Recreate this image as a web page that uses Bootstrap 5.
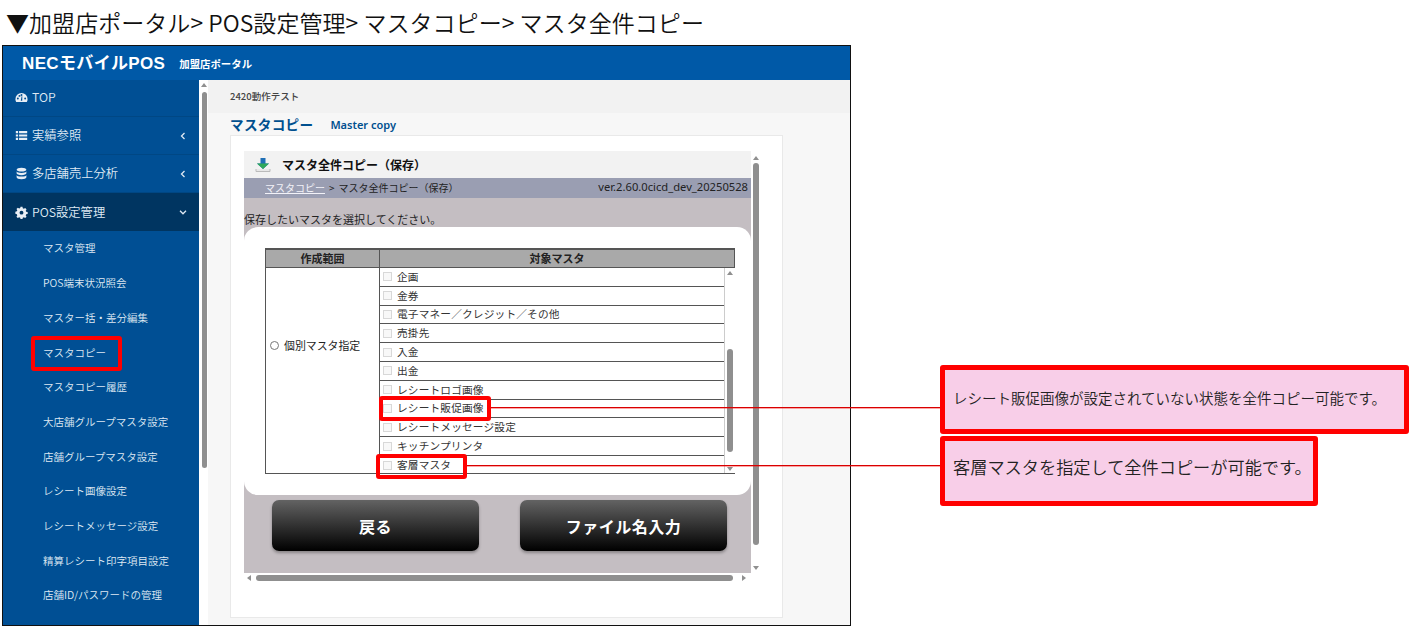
<!DOCTYPE html>
<html lang="ja"><head><meta charset="utf-8"><title>マスタ全件コピー</title>
<link href="https://cdn.jsdelivr.net/npm/bootstrap@5.3.0/dist/css/bootstrap.min.css" rel="stylesheet">
<style>
html,body{height:628px;overflow:hidden;background:#fff}
body{font-family:"Noto Sans CJK JP","Liberation Sans",sans-serif;position:relative;color:#222}
.doc-title{height:45px;padding:6px 0 0 6px;font-size:23px;line-height:32px;color:#111;white-space:nowrap;font-weight:350;letter-spacing:.05px}
.app-win{margin-left:2px;width:849px;height:581px;border:1px solid #111;overflow:hidden;background:#f7f7f7}
.app-head{height:34px;background:#0059a7;color:#fff;padding-left:19px;flex:none}
.app-logo{font-family:"Liberation Sans","Noto Sans CJK JP",sans-serif;font-weight:700;font-size:17px;letter-spacing:.35px;margin-top:1px}
.app-sub{font-size:10.4px;font-weight:700;margin-left:14px;margin-top:1px}
.app-side{width:196px;background:#004f94;color:#dfe9f3;flex:none}
.side-main{height:38px;padding:0 12px;font-size:12.3px;border-bottom:1px solid #004784;font-weight:350}
.side-main:first-child{height:37px;padding-bottom:2px}
.side-main svg{width:13px;height:13px;fill:#e8eef5;margin-right:4px;flex:none}
.side-main .chev{margin-left:auto;margin-right:0;width:8px;height:8px;stroke:#dfe9f3;fill:none;stroke-width:1.3}
.side-open{background:#003561;color:#dfe9f3;border-bottom:0}
.side-sub{height:34.7px;padding-left:40px;font-size:10.5px;font-weight:350}
.app-main{flex:1;min-width:0;position:relative}
.vbar{width:9px;background:#fff;flex:none;position:relative}
.sb-thumb{background:#8f8f8f;border-radius:3px}
.main-vthumb{width:5px;height:376px;margin:5px 0 0 3px}
.arr-u,.arr-d,.arr-l,.arr-r{width:0;height:0;border-style:solid;border-color:transparent}
.arr-u{border-width:0 3px 4px;border-bottom-color:#8f8f8f}
.arr-d{border-width:4px 3px 0;border-top-color:#8f8f8f}
.arr-l{border-width:3px 4px 3px 0;border-right-color:#8f8f8f}
.arr-r{border-width:3px 0 3px 4px;border-left-color:#8f8f8f}
.main-up{margin:3px 0 0 2px}
.store-bar{height:33px;background:#f2f2f2;padding-left:22px;font-size:9.5px;font-weight:500;color:#444}
.page-head{height:22px;padding:0 0 0 22px;color:#00508f;font-weight:700}
.page-title{font-size:13.6px;letter-spacing:.3px}
.page-en{font-family:"Noto Sans","Liberation Sans",sans-serif;font-size:11px;margin-left:17px;font-weight:600;margin-top:3px}
.wcard{width:553px;height:483px;margin-left:22px;background:#fff;border:1px solid #e9e9e9;padding:15px 0 0 13px}
.frame-col{width:507px;flex:none}
.frame-top{height:27px;background:#f2f2f2;padding-left:10px;font-size:12px;font-weight:700;color:#111}
.frame-top svg{width:18px;height:18px;margin-right:10px}
.crumb{height:20px;background:#9a9eb2;font-size:10px;color:#222;padding:0 3px 2px 21px}
.crumb a{color:#f2f2f8}
.crumb-sep{margin:0 4px}
.crumb-ver{margin-left:auto;font-family:"Noto Sans","Liberation Sans",sans-serif;font-size:11.2px;color:#222}
.frame-body{height:375px;background:#c4bec2;padding-top:14px}
.lead-txt{font-size:11px;line-height:15px;color:#222}
.panel-w{height:268px;background:#fff;border-radius:14px;margin-top:0;padding:21px 16px 0 21px}
.tbl{width:470px;height:226px;border:1px solid #555;border-top:2px solid #555}
.tbl-head{height:18px;background:#a9a9a9;font-size:11px;font-weight:700;color:#222;border-bottom:1px solid #555;text-align:center}
.th-a{width:114px;border-right:1px solid #555;line-height:17px}
.th-b{flex:1;line-height:17px}
.td-a{width:114px;font-size:10.9px;padding-left:4px;border-right:1px solid #555;flex:none;padding-bottom:50px}
.radio-o{width:9px;height:9px;border:1px solid #777;border-radius:50%;margin-right:5px;background:#fff}
.td-list{width:344px;flex:none}
.rowx{height:18.8px;border-bottom:1px solid #555;font-size:10.7px;padding-left:3px;color:#333;letter-spacing:.15px}
.rowx:last-child{border-bottom:0}
.box-c{width:9px;height:9px;border:1px solid #d8d8d8;background:#f8f8f8;margin-right:5px;flex:none}
.tbar{width:11px;flex:none;background:#fff;border-left:1px solid #ccc;position:relative}
.tbar-thumb{position:absolute;left:2px;top:81px;width:6px;height:103px}
.tbar .arr-u{position:absolute;left:2px;top:3px}
.tbar .arr-d{position:absolute;left:2px;bottom:2px}
.btn-row{height:75px;padding:5px 23px 0 28px;gap:41px}
.btn-blk{width:207px;height:51px;border-radius:7px;border:0;padding:0;color:#fff;font-weight:700;font-size:16px;letter-spacing:.5px;background:linear-gradient(#636363,#000);box-shadow:0 2px 3px rgba(0,0,0,.3)}
.btn-blk:hover,.btn-blk:active{color:#fff}
.frame-vbar{height:422px;padding-left:2px}
.frame-vbar .arr-u{margin:5px 0 3px 0}
.frame-vbar .sb-thumb{width:6px;height:382px}
.frame-vbar .arr-d{position:absolute;left:2px;top:415px}
.hbar{height:10px;width:507px;position:relative}
.hbar .sb-thumb{position:absolute;left:12px;top:2px;width:477px;height:6px}
.hbar .arr-l{position:absolute;left:3px;top:2px}
.hbar .arr-r{position:absolute;left:498px;top:2px}
.mark-r{position:absolute;border:4px solid #f00;border-radius:3px;pointer-events:none}
.mk-side{left:31px;top:336px;width:91px;height:35px}
.mk-a{left:379px;top:396px;width:112px;height:25px}
.mk-b{left:376px;top:454px;width:91px;height:25px}
.lead-r{position:absolute;height:1px;background:#d80000;box-shadow:0 1px 0 rgba(255,0,0,.35)}
.ld-a{left:491px;top:407px;width:450px}
.ld-b{left:467px;top:465px;width:474px}
.note{position:absolute;background:#f8cee8;border:5px solid #f00;border-radius:3px;color:#222;padding-left:8px;font-weight:350}
.nt-a{left:940px;top:365px;width:469px;height:69px;font-size:14.5px;padding-bottom:4px}
.nt-b{left:940px;top:436px;width:378px;height:70px;font-size:17.2px;padding-bottom:8px}
</style></head><body>
<div class="doc-title">▼加盟店ポータル&gt; POS設定管理&gt; マスタコピー&gt; マスタ全件コピー</div>
<div class="app-win d-flex flex-column">
 <div class="app-head d-flex align-items-center"><span class="app-logo">NECモバイルPOS</span><span class="app-sub">加盟店ポータル</span></div>
 <div class="d-flex flex-grow-1" style="min-height:0">
  <div class="app-side">
   <div class="side-main d-flex align-items-center"><svg viewBox="0 0 16 16"><path d="M8 2.500A7.500 7.500 0 0 0 .5 10c0 1.400.4 2.600 1 3.500h13c.6-.9 1-2.100 1-3.500A7.500 7.500 0 0 0 8 2.500zM3.500 10.500a1.200 1.200 0 1 1 0-2.400 1.200 1.200 0 0 1 0 2.400zm2-3.300a1.200 1.200 0 1 1 0-2.400 1.200 1.200 0 0 1 0 2.400zM8 6a1.200 1.200 0 1 1 0-2.400A1.200 1.200 0 0 1 8 6zm.9 6H7.100l1-5.500.9.100zm3.600-1.500a1.200 1.200 0 1 1 0-2.400 1.200 1.200 0 0 1 0 2.400z"/></svg>TOP</div>
   <div class="side-main d-flex align-items-center"><svg viewBox="0 0 16 16"><path d="M1 2.500h2.800v2.600H1zM5 2.500h10v2.600H5zM1 6.700h2.800v2.600H1zM5 6.700h10v2.600H5zM1 10.900h2.800v2.600H1zM5 10.900h10v2.600H5z"/></svg>実績参照<svg class="chev" viewBox="0 0 8 8"><path d="M5.500 1 2.500 4l3 3"/></svg></div>
   <div class="side-main d-flex align-items-center"><svg viewBox="0 0 16 16"><path d="M8 1C4.700 1 2 2 2 3.300S4.700 5.600 8 5.600s6-1 6-2.300S11.300 1 8 1zM2 5.300v2.400C2 9 4.700 10 8 10s6-1 6-2.300V5.300C14 6.600 11.300 7.300 8 7.300S2 6.600 2 5.300zm0 4.400v2.800C2 13.900 4.700 15 8 15s6-1.100 6-2.500V9.700c0 1.300-2.700 2-6 2s-6-.7-6-2z"/></svg>多店舗売上分析<svg class="chev" viewBox="0 0 8 8"><path d="M5.500 1 2.500 4l3 3"/></svg></div>
   <div class="side-main side-open d-flex align-items-center"><svg viewBox="0 0 16 16"><path fill-rule="evenodd" d="M6.800 1h2.400l.4 1.900 1.300.6 1.700-1 1.600 1.700-1 1.600.5 1.300 1.900.4v2.400l-1.900.4-.5 1.300 1 1.700-1.700 1.600-1.600-1-1.300.5-.4 1.900H6.800l-.4-1.900-1.300-.5-1.700 1-1.600-1.700 1-1.600-.5-1.300L.4 9.400V7l1.900-.4.5-1.300-1-1.700L3.500 2l1.600 1 1.300-.5zM8 5.800a2.400 2.400 0 1 0 0 4.800 2.400 2.400 0 0 0 0-4.800z"/></svg>POS設定管理<svg class="chev" viewBox="0 0 8 8"><path d="M1 2.800 4 5.800l3-3"/></svg></div>
   <div class="side-sub d-flex align-items-center">マスタ管理</div>
   <div class="side-sub d-flex align-items-center">POS端末状況照会</div>
   <div class="side-sub d-flex align-items-center">マスター括・差分編集</div>
   <div class="side-sub d-flex align-items-center">マスタコピー</div>
   <div class="side-sub d-flex align-items-center">マスタコピー履歴</div>
   <div class="side-sub d-flex align-items-center">大店舗グループマスタ設定</div>
   <div class="side-sub d-flex align-items-center">店舗グループマスタ設定</div>
   <div class="side-sub d-flex align-items-center">レシート画像設定</div>
   <div class="side-sub d-flex align-items-center">レシートメッセージ設定</div>
   <div class="side-sub d-flex align-items-center">精算レシート印字項目設定</div>
   <div class="side-sub d-flex align-items-center">店舗ID/パスワードの管理</div>
  </div>
  <div class="vbar"><div class="arr-u main-up"></div><div class="sb-thumb main-vthumb"></div></div>
  <div class="app-main">
   <div class="store-bar d-flex align-items-center">2420動作テスト</div>
   <div class="page-head d-flex align-items-center"><span class="page-title">マスタコピー</span><span class="page-en">Master copy</span></div>
   <div class="wcard d-flex">
    <div class="frame-col">
     <div class="frame-top d-flex align-items-center"><svg viewBox="0 0 18 18"><path d="M2 13v2.500h14V13" fill="#e8e8e8" stroke="#bbb"/><path d="M6.500 2h5v5.500H15L9 13 3 7.500h3.500z" fill="#1f6fb5"/><path d="M6.500 7.500H3L9 13l6-5.500h-3.500z" fill="#2fa85a"/></svg>マスタ全件コピー（保存）</div>
     <div class="crumb d-flex align-items-center"><span><a href="#">マスタコピー</a><span class="crumb-sep">&gt;</span>マスタ全件コピー（保存）</span><span class="crumb-ver">ver.2.60.0cicd_dev_20250528</span></div>
     <div class="frame-body">
      <div class="lead-txt">保存したいマスタを選択してください。</div>
      <div class="panel-w">
       <div class="tbl d-flex flex-column">
        <div class="tbl-head d-flex"><div class="th-a">作成範囲</div><div class="th-b">対象マスタ</div></div>
        <div class="d-flex flex-grow-1" style="min-height:0">
         <div class="td-a d-flex align-items-center"><span class="radio-o"></span>個別マスタ指定</div>
         <div class="td-list">
          <div class="rowx d-flex align-items-center"><span class="box-c"></span>企画</div>
          <div class="rowx d-flex align-items-center"><span class="box-c"></span>金券</div>
          <div class="rowx d-flex align-items-center"><span class="box-c"></span>電子マネー／クレジット／その他</div>
          <div class="rowx d-flex align-items-center"><span class="box-c"></span>売掛先</div>
          <div class="rowx d-flex align-items-center"><span class="box-c"></span>入金</div>
          <div class="rowx d-flex align-items-center"><span class="box-c"></span>出金</div>
          <div class="rowx d-flex align-items-center"><span class="box-c"></span>レシートロゴ画像</div>
          <div class="rowx d-flex align-items-center"><span class="box-c"></span>レシート販促画像</div>
          <div class="rowx d-flex align-items-center"><span class="box-c"></span>レシートメッセージ設定</div>
          <div class="rowx d-flex align-items-center"><span class="box-c"></span>キッチンプリンタ</div>
          <div class="rowx d-flex align-items-center"><span class="box-c"></span>客層マスタ</div>
         </div>
         <div class="tbar flex-grow-1"><div class="arr-u"></div><div class="sb-thumb tbar-thumb"></div><div class="arr-d"></div></div>
        </div>
       </div>
      </div>
      <div class="btn-row d-flex">
       <button type="button" class="btn btn-blk">戻る</button>
       <button type="button" class="btn btn-blk">ファイル名入力</button>
      </div>
     </div>
     <div class="hbar"><div class="arr-l"></div><div class="sb-thumb"></div><div class="arr-r"></div></div>
    </div>
    <div class="vbar frame-vbar"><div class="arr-u"></div><div class="sb-thumb"></div><div class="arr-d"></div></div>
   </div>
  </div>
 </div>
</div>
<div class="mark-r mk-side"></div><div class="mark-r mk-a"></div><div class="mark-r mk-b"></div>
<div class="lead-r ld-a"></div><div class="lead-r ld-b"></div>
<div class="note nt-a d-flex align-items-center">レシート販促画像が設定されていない状態を全件コピー可能です。</div>
<div class="note nt-b d-flex align-items-center">客層マスタを指定して全件コピーが可能です。</div>
<script src="https://cdn.jsdelivr.net/npm/bootstrap@5.3.0/dist/js/bootstrap.bundle.min.js"></script>
</body></html>
